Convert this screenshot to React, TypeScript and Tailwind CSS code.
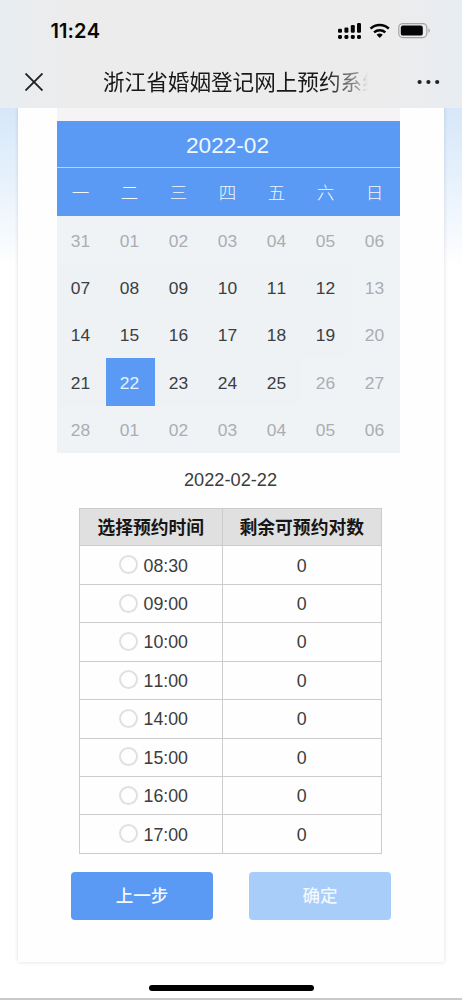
import React from 'react';

const weekdays = ['一', '二', '三', '四', '五', '六', '日'];

const weeks: { day: string; active: boolean }[][] = [
  ['31', '01', '02', '03', '04', '05', '06'].map((day) => ({ day, active: false })),
  ['07', '08', '09', '10', '11', '12', '13'].map((day, i) => ({ day, active: i < 6 })),
  ['14', '15', '16', '17', '18', '19', '20'].map((day, i) => ({ day, active: i < 6 })),
  ['21', '22', '23', '24', '25', '26', '27'].map((day, i) => ({ day, active: i < 5 })),
  ['28', '01', '02', '03', '04', '05', '06'].map((day) => ({ day, active: false })),
];

const slots = ['08:30', '09:00', '10:00', '11:00', '14:00', '15:00', '16:00', '17:00'];

function StatusIcons() {
  return (
    <svg className="h-[20px] w-[98px]" viewBox="0 0 98 20" fill="none">
      <g fill="#050505">
        <rect x="1" y="8.8" width="4" height="4" rx="1.2" />
        <rect x="7.4" y="7.6" width="4" height="5.2" rx="1.2" />
        <rect x="13.8" y="5" width="4" height="7.8" rx="1.2" />
        <rect x="20" y="3" width="4" height="9.8" rx="1.2" />
        <rect x="1" y="15" width="4" height="4" rx="1.4" />
        <rect x="7.4" y="15" width="4" height="4" rx="1.4" />
        <rect x="13.8" y="15" width="4" height="4" rx="1.4" />
        <rect x="20" y="15" width="4" height="4" rx="1.4" />
      </g>
      <g stroke="#050505" strokeWidth="2.6">
        <path d="M33.6 8.6 A13.4 13.4 0 0 1 51.8 8.6" />
        <path d="M37.1 12.4 A8.4 8.4 0 0 1 48.3 12.4" />
      </g>
      <path d="M42.7 18 L39.6 14.8 A4.6 4.6 0 0 1 45.8 14.8 Z" fill="#050505" />
      <rect x="61.8" y="3.6" width="28" height="14" rx="4" stroke="#a3a3a3" strokeWidth="1.2" />
      <rect x="63.8" y="5.6" width="22" height="10" rx="2.2" fill="#050505" />
      <path d="M91.4 8.4 C93.2 9 93.2 12.2 91.4 12.8 Z" fill="#a3a3a3" />
    </svg>
  );
}

function Header() {
  return (
    <header className="h-[108px] shrink-0 bg-[linear-gradient(90deg,#e8edf1_0%,#ececed_14%,#ececed_85%,#e8edf1_100%)]">
      <div className="flex h-[60px] items-center justify-between pr-[27px] pl-[50.5px]">
        <span className="pt-[2px] font-['Inter',sans-serif] text-[20px] font-semibold tracking-[0.1px] text-[#080808]">
          11:24
        </span>
        <StatusIcons />
      </div>
      <div className="flex h-[43px] items-center pr-[22px] pl-[25px]">
        <svg className="h-[18px] w-[18px] shrink-0" viewBox="0 0 18 18" stroke="#222" strokeWidth="1.9">
          <path d="M0.5 0.5 L17.5 17.5 M17.5 0.5 L0.5 17.5" />
        </svg>
        <h1 className="ml-[60px] w-[265px] overflow-hidden pt-[2px] text-[21.6px] leading-[30px] font-normal whitespace-nowrap text-[#181818] [mask-image:linear-gradient(90deg,#000_84%,rgba(0,0,0,0.45)_95%,transparent_100%)]">
          浙江省婚姻登记网上预约系统
        </h1>
        <svg className="ml-auto h-[6px] w-[23px] shrink-0" viewBox="0 0 23 6" fill="#222">
          <circle cx="2.6" cy="3" r="2.1" />
          <circle cx="11.4" cy="3" r="2.1" />
          <circle cx="20.2" cy="3" r="2.1" />
        </svg>
      </div>
    </header>
  );
}

function Calendar() {
  return (
    <section className="ml-[39px] w-[343px] bg-[#f0f3f6]">
      <div className="h-[13px] bg-[#f5f3f6]" />
      <div className="flex h-[47px] items-center justify-center border-b border-[#b5d3fb] bg-[#5a9af5] pt-[4px] pr-[2px] text-[22.6px] text-[#f0f7ff]">
        2022-02
      </div>
      <div className="grid h-[48px] grid-cols-7 items-center bg-[#5a9af5] pt-[2px] text-center text-[17.5px] font-light text-[#f0f7ff]">
        {weekdays.map((d) => (
          <span key={d} className="pr-[2px]">
            {d}
          </span>
        ))}
      </div>
      {weeks.map((week, w) => (
        <div key={w} className="grid h-[47.4px] grid-cols-7 text-center text-[17.4px]">
          {week.map(({ day, active }, i) => {
            const selected = w === 3 && i === 1;
            const tone = selected
              ? 'bg-[#5a9af5] text-[#e6f2ff]'
              : active
                ? 'bg-[#eef2f5] text-[#3b3e42]'
                : 'text-[#abadb0]';
            return (
              <span key={i} className={`flex items-center justify-center pt-[2px] pr-[2px] ${tone}`}>
                {day}
              </span>
            );
          })}
        </div>
      ))}
    </section>
  );
}

function Slots() {
  return (
    <table className="mr-auto ml-[61px] w-[303px] table-fixed border-collapse text-center text-[17.8px] leading-[20px] text-[#3c3c3c]">
      <colgroup>
        <col className="w-[142.5px]" />
        <col />
      </colgroup>
      <thead>
        <tr className="h-[37.4px] bg-[#e0e0e0] text-[#161616]">
          <th className="border border-[#cccccc] p-0 pt-[1px] font-bold">选择预约时间</th>
          <th className="border border-[#cccccc] p-0 pt-[1px] font-bold">剩余可预约对数</th>
        </tr>
      </thead>
      <tbody>
        {slots.map((time) => (
          <tr key={time} className="h-[38.45px]">
            <td className="border border-[#cccccc] p-0">
              <label className="flex items-center justify-center gap-[6px] pl-[5px]">
                <span className="mb-[1px] h-[19px] w-[19px] rounded-full border-2 border-[#e0e0e0]" />
                <span className="pt-[1px]">{time}</span>
              </label>
            </td>
            <td className="border border-[#cccccc] p-0 pt-[1px]">0</td>
          </tr>
        ))}
      </tbody>
    </table>
  );
}

export default function App() {
  return (
    <div className="flex h-[1000px] w-[462px] flex-col overflow-hidden border-b-2 border-[#c9c9c9] bg-white font-['Liberation_Sans','Noto_Sans_CJK_SC',sans-serif] [font-kerning:none]">
      <Header />
      <main className="flex-1 bg-[linear-gradient(180deg,#d6e7f9_0px,#e5f0fc_65px,#ffffff_160px)]">
        <div className="mx-[18px] h-[854px] bg-[#fefefe] shadow-[0_0_4px_rgba(0,0,0,0.14)] [clip-path:inset(0_-6px_-6px_-6px)]">
          <Calendar />
          <p className="flex h-[55px] items-center pl-[166px] text-[18.2px] text-[#3c3c3c]">2022-02-22</p>
          <Slots />
          <div className="mt-[18px] ml-[53px] flex gap-[36px] text-[17.5px] font-medium text-[#f2f8ff]">
            <button className="h-[48.5px] w-[142px] rounded-[4px] bg-[#5a9af5]">上一步</button>
            <button className="h-[48.5px] w-[142px] rounded-[4px] bg-[#a9cdf9]">确定</button>
          </div>
        </div>
        <div className="mx-auto mt-[22.5px] h-[6px] w-[165px] rounded-full bg-black" />
      </main>
    </div>
  );
}
